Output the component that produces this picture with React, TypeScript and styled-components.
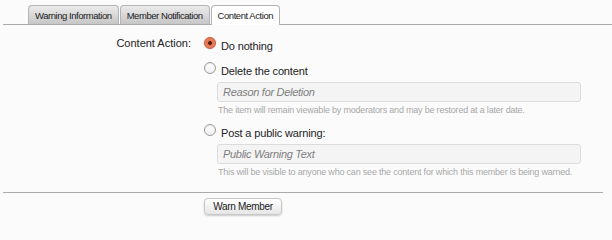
import React from "react";
import styled, { createGlobalStyle } from "styled-components";

const Global = createGlobalStyle`
  html, body { margin: 0; padding: 0; }
  body {
    background: #fbfbfc;
    font-family: "Liberation Sans", Arial, sans-serif;
    color: #222;
  }
`;

const Page = styled.div`
  width: 612px;
  height: 220px;
  overflow: hidden;
`;

const TabBar = styled.div`
  display: flex;
  align-items: flex-end;
  gap: 1px;
  margin: 0 0 0 3px;
  padding: 5px 0 0 25px;
  border-bottom: 1px solid #a9a9a9;
  height: 19px;
`;

const Tab = styled.div<{ $active?: boolean }>`
  box-sizing: border-box;
  padding: 0 6px;
  display: flex;
  align-items: center;
  font-size: 9.5px;
  letter-spacing: -0.45px;
  color: #222;
  border: 1px solid #b4b4b4;
  border-bottom: none;
  border-radius: 4px 4px 0 0;
  background: ${(p) =>
    p.$active ? "#ffffff" : "linear-gradient(#ebebeb, #c6c6c6)"};
  margin-bottom: ${(p) => (p.$active ? "-1px" : "0")};
  height: ${(p) => (p.$active ? "20px" : "19px")};
`;

const Form = styled.div`
  display: grid;
  grid-template-columns: 191px 1fr;
  column-gap: 13px;
  padding-top: 12px;
`;

const Label = styled.div`
  text-align: right;
  font-size: 11px;
  color: #222;
`;

const Options = styled.div`
  display: flex;
  flex-direction: column;
`;

const Option = styled.label<{ $h: number }>`
  display: flex;
  align-items: flex-start;
  gap: 5px;
  font-size: 11px;
  letter-spacing: -0.15px;
  height: ${(p) => p.$h}px;
`;

const Radio = styled.span<{ $checked?: boolean }>`
  box-sizing: border-box;
  width: 12px;
  height: 12px;
  border-radius: 50%;
  flex: none;
  border: 1px solid ${(p) => (p.$checked ? "#c65a3a" : "#9a9a9a")};
  background: ${(p) =>
    p.$checked
      ? "radial-gradient(circle at 50% 50%, #5a1d10 0 1.6px, #e0704f 2.2px, #f08a68 100%)"
      : "linear-gradient(#ffffff, #f0f0f0)"};
  box-shadow: ${(p) =>
    p.$checked ? "0 0 1px rgba(200,80,50,0.5)" : "inset 0 1px 1px rgba(0,0,0,0.08)"};
`;

const OptionText = styled.span`
  padding-top: 3px;
`;

const SubField = styled.div`
  padding-left: 13px;
  display: flex;
  flex-direction: column;
`;

const TextInput = styled.div`
  box-sizing: border-box;
  width: 364px;
  height: 20px;
  border: 1px solid #dcdcdc;
  border-radius: 3px;
  background: #f4f4f4;
  font-style: italic;
  font-size: 11px;
  letter-spacing: -0.3px;
  color: #808080;
  display: flex;
  align-items: center;
  padding-left: 5px;
`;

const Hint = styled.div`
  font-size: 9px;
  line-height: 10px;
  letter-spacing: -0.2px;
  color: #a8a8a8;
  margin: 3px 0 0 1px;
  height: 19px;
`;

const Divider = styled.div`
  margin: 6px 9px 0 3px;
  border-top: 1px solid #aaa;
`;

const Footer = styled.div`
  padding: 5px 0 0 204px;
`;

const Button = styled.button`
  box-sizing: border-box;
  display: block;
  width: 78px;
  height: 17px;
  padding: 0;
  font-family: inherit;
  font-size: 10px;
  letter-spacing: -0.3px;
  color: #222;
  border: 1px solid #c8c8c8;
  border-radius: 4px;
  background: linear-gradient(#ffffff, #e6e6e6);
  box-shadow: 0 1px 2px rgba(0, 0, 0, 0.2);
`;

export default function App() {
  return (
    <Page>
      <Global />
      <TabBar>
        <Tab>Warning Information</Tab>
        <Tab>Member Notification</Tab>
        <Tab $active>Content Action</Tab>
      </TabBar>
      <Form>
        <Label>Content Action:</Label>
        <Options>
          <Option $h={25}>
            <Radio $checked />
            <OptionText>Do nothing</OptionText>
          </Option>
          <Option $h={20}>
            <Radio />
            <OptionText>Delete the content</OptionText>
          </Option>
          <SubField>
            <TextInput>Reason for Deletion</TextInput>
            <Hint>
              The item will remain viewable by moderators and may be restored at a later date.
            </Hint>
          </SubField>
          <Option $h={20}>
            <Radio />
            <OptionText>Post a public warning:</OptionText>
          </Option>
          <SubField>
            <TextInput>Public Warning Text</TextInput>
            <Hint>
              This will be visible to anyone who can see the content for which this member is being warned.
            </Hint>
          </SubField>
        </Options>
      </Form>
      <Divider />
      <Footer>
        <Button>Warn Member</Button>
      </Footer>
    </Page>
  );
}
